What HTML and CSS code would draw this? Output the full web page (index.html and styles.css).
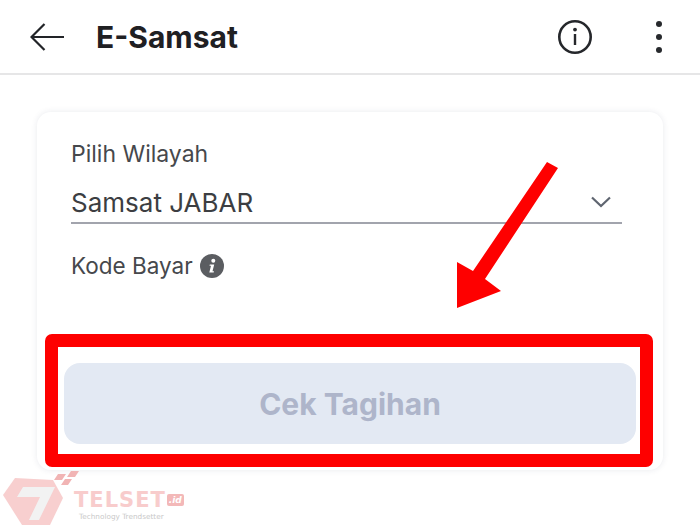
FILE: index.html
```html
<!DOCTYPE html>
<html lang="id">
<head>
<meta charset="utf-8">
<title>E-Samsat</title>
<link rel="stylesheet" href="styles.css">
</head>
<body>
<div class="screen">
  <header class="topbar">
    <svg class="back" width="36" height="30" viewBox="0 0 36 30"><path d="M34 15H2M14.500 2 1.500 15l13 13" fill="none" stroke="#222428" stroke-width="2.200"/></svg>
    <h1 class="title">E-Samsat</h1>
    <svg class="info" width="36" height="36" viewBox="0 0 36 36"><circle cx="18" cy="18" r="15.700" fill="none" stroke="#25272b" stroke-width="2.600"/><circle cx="18" cy="10.600" r="1.900" fill="#25272b"/><rect x="16.800" y="15" width="2.400" height="11" fill="#25272b"/></svg>
    <div class="more"><span class="dot"></span><span class="dot"></span><span class="dot"></span></div>
  </header>
  <main class="content">
    <section class="card">
      <div class="form">
        <label class="label">Pilih Wilayah</label>
        <div class="select">
          <span class="value">Samsat JABAR</span>
          <svg class="chevron" width="20" height="12" viewBox="0 0 20 12"><path d="M1 1.500 10 10l9-8.500" fill="none" stroke="#5f6570" stroke-width="2.200"/></svg>
        </div>
        <div class="label code">Kode Bayar
          <svg class="hint" width="24" height="24" viewBox="0 0 24 24"><circle cx="12" cy="12" r="12" fill="#5b5d61"/><circle cx="13.300" cy="6.800" r="2" fill="#fff"/><path d="M9.800 10.500h4.400l-1.700 6.700h1.500l-.3 1.300H9.300l1.700-6.700H9.500z" fill="#fff"/></svg>
        </div>
      </div>
      <button class="submit" type="button">Cek Tagihan</button>
    </section>
  </main>
  <div class="frame"></div>
  <svg class="arrow" width="102" height="147" viewBox="0 0 102 147"><path d="M90 0 101 6 28 117 44 129 0 146 0 100 16 109z" fill="#fe0000"/></svg>
  <div class="mark">
    <svg class="mark-logo" width="78" height="58" viewBox="0 0 78 58"><path d="M12 8 50 10 60 28 47 55H19L0 25z" fill="#f8cfcf"/><path d="M20 17H52L36 50H26L37 27H14z" fill="#f2f2f2"/><path d="M55 4h8l-4 6h-8zM68 1h8l-4 6h-8zM62 9h7l-4 6h-7z" fill="#f1b4b4"/></svg>
    <div class="mark-text">
      <div class="mark-name">TELSET<span class="mark-tld">.id</span></div>
      <div class="mark-tag">Technology Trendsetter</div>
    </div>
  </div>
</div>
</body>
</html>
```
FILE: styles.css
```css
* { box-sizing: border-box; }
html, body { margin: 0; padding: 0; }
body { background: #fff; font-family: Inter, "Liberation Sans", sans-serif; }
.screen { position: relative; width: 700px; height: 529px; overflow: hidden; background: #fff; }
.topbar {
  height: 75px;
  display: flex;
  align-items: center;
  padding: 0 38px 0 30px;
  border-bottom: 2px solid #e6e6e7;
}
.back { flex: none; }
.title { margin: 0 0 0 30px; flex: 1; font-size: 30px; font-weight: 700; color: #1f2023; }
.info { flex: none; margin-right: 63px; }
.more { flex: none; display: flex; flex-direction: column; gap: 7px; width: 6px; }
.dot { width: 6px; height: 6px; border-radius: 50%; background: #27292d; }
.content { padding: 37px 37px 0; }
.card {
  height: 358px;
  border-radius: 14px;
  background: #fff;
  box-shadow: 0 0 6px rgba(40, 50, 90, 0.1);
  padding: 27px 27px 26px;
  display: flex;
  flex-direction: column;
  justify-content: space-between;
}
.form { padding: 0 14px 0 7px; }
.label { display: flex; align-items: center; font-size: 23px; line-height: 30px; color: #46484c; gap: 7px; }
.select {
  display: flex;
  align-items: center;
  justify-content: space-between;
  height: 51px;
  margin-top: 4px;
  padding: 9px 11px 0 0;
  border-bottom: 2px solid #a2a4ad;
}
.value { font-size: 26px; color: #3c3e42; }
.code { margin-top: 27px; font-size: 22.500px; }
.submit {
  height: 81px;
  border: 0;
  border-radius: 16px;
  background: #e3e9f3;
  color: #aeb5ca;
  font-family: Inter, "Liberation Sans", sans-serif;
  font-size: 30px;
  font-weight: 700;
}
.frame {
  position: absolute;
  left: 45px;
  top: 334px;
  width: 608px;
  height: 133px;
  border: 13px solid #fe0000;
  border-radius: 7px;
}
.arrow { position: absolute; left: 457px; top: 162px; }
.mark { position: absolute; left: 3px; top: 470px; display: flex; }
.mark-text { margin: 18px 0 0 -7px; }
.mark-name { display: flex; align-items: center; font-family: "DejaVu Sans", sans-serif; font-size: 21px; line-height: 24px; font-weight: 700; color: #f8cccc; letter-spacing: 1px; }
.mark-tld { margin-left: 1px; padding: 0 2px; border-radius: 2px; background: #f3b8b8; font-size: 9px; line-height: 12px; letter-spacing: 0; color: #fff; font-style: italic; }
.mark-tag { margin-left: 5px; font-family: "DejaVu Sans", sans-serif; font-size: 7.300px; line-height: 9px; color: #c9c9c9; }
```
